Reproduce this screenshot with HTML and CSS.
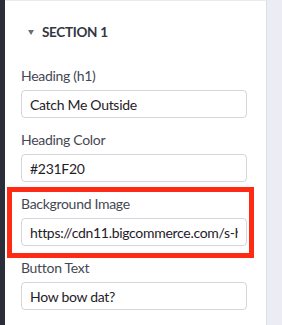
FILE: index.html
```html
<!DOCTYPE html>
<html lang="en">
<head>
  <meta charset="UTF-8">
  <title>Section settings</title>
  <meta name="viewport" content="width=device-width, initial-scale=1.0">
  <link rel="stylesheet" href="styles.css">
</head>
<body>
  <div class="rail"></div>
  <div class="panel">
    <div class="section-title">
      <span class="caret"></span>
      SECTION 1
    </div>

    <div class="field">
      <label>Heading (h1)</label>
      <input type="text" value="Catch Me Outside">
    </div>

    <div class="field">
      <label>Heading Color</label>
      <input type="text" value="#231F20">
    </div>

    <div class="field highlight">
      <label>Background Image</label>
      <input type="text" value="https://cdn11.bigcommerce.com/s-hm8pjhul3k/images/stencil/original/image-manager/bg.jpg">
    </div>

    <div class="field">
      <label>Button Text</label>
      <input type="text" value="How bow dat?">
    </div>
  </div>
  <div class="backdrop"></div>
</body>
</html>
```

FILE: styles.css
```css
body {
  margin: 0;
  padding: 0;
  font-family: 'Lato', 'Open Sans', sans-serif;
  background: #ecedf4;
  display: flex;
  height: 325px;
  overflow: hidden;
}

.rail {
  width: 5px;
  background: #2b2d3b;
  flex-shrink: 0;
}

.panel {
  width: 262px;
  flex-shrink: 0;
  background: #fff;
  border-top: 1px solid #e8eaee;
  border-right: 1px solid #dcdee6;
  padding: 21px 0 0 16px;
  box-sizing: border-box;
}

.section-title {
  display: flex;
  align-items: center;
  gap: 8px;
  height: 20px;
  padding-left: 7px;
  font-size: 13.5px;
  font-weight: 700;
  letter-spacing: -0.3px;
  color: #33363f;
  margin-bottom: 24px;
}

.caret {
  width: 0;
  height: 0;
  border-left: 3.5px solid transparent;
  border-right: 3.5px solid transparent;
  border-top: 5px solid #6b6e78;
}

.field {
  position: relative;
  width: 226px;
  margin-bottom: 12px;
}

.field label {
  display: block;
  font-size: 14px;
  line-height: 20px;
  letter-spacing: -0.3px;
  color: #454853;
  margin-bottom: 4px;
}

.field input {
  display: block;
  width: 100%;
  height: 28px;
  box-sizing: border-box;
  border: 1px solid #d3d6dd;
  border-radius: 4px;
  padding: 0 8px;
  font-family: inherit;
  font-size: 14px;
  letter-spacing: -0.3px;
  color: #1f2128;
  background: #fff;
  outline: none;
}

.highlight::after {
  content: "";
  position: absolute;
  top: -7px;
  bottom: -12px;
  left: -14px;
  right: -7px;
  border: 5px solid #ff2a14;
  pointer-events: none;
}

.backdrop {
  flex: 1;
}
```
